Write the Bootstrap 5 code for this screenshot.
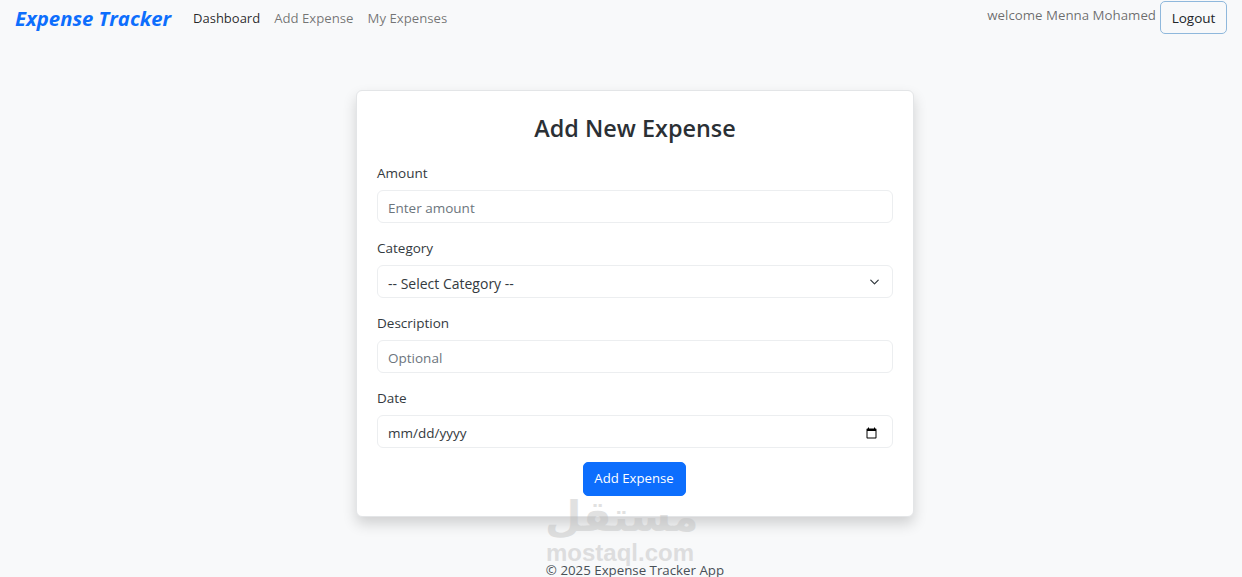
<!DOCTYPE html>
<html>
<head>
    <meta charset="utf-8">
    <meta name="viewport" content="width=device-width, initial-scale=1">
    <title>Expense Tracker</title>
    <link href="https://cdn.jsdelivr.net/npm/bootstrap@5.3.3/dist/css/bootstrap.min.css" rel="stylesheet">
    <style>
        html, body {
            height: 577px;
            overflow: hidden;
        }
        body {
            background: #f8f9fa;
            font-family: "Open Sans", "Noto Sans", sans-serif;
            font-size: 13.5px;
            color: #212529;
            position: relative;
        }
        .top-bar {
            padding: 1px 15px 0 15px;
            height: 35px;
        }
        .top-bar .navbar-brand {
            color: #0d6efd;
            font-size: 20.3px;
            font-weight: 700;
            font-style: italic;
            padding: 0;
            margin-right: 14px;
            line-height: 36px;
        }
        .top-bar .nav-link {
            font-size: 13.2px;
            padding: 0 7px;
            color: rgba(0, 0, 0, .55);
            line-height: 36px;
        }
        .top-bar .nav-link.active {
            color: rgba(0, 0, 0, .85);
            font-size: 13px;
        }
        .top-bar .nav-item + .nav-item .nav-link {
            margin-left: -2px;
        }
        .user-box {
            margin-top: 1px;
        }
        .hello-text {
            color: rgba(0, 0, 0, .58);
            font-size: 13.3px;
            margin-right: 4px;
            margin-top: -3px;
        }
        .logout-btn {
            font-size: 13.5px;
            width: 67px;
            height: 33px;
            padding: 1px 0 0;
            color: #212529;
            background: #f8f9fa;
            border: 1px solid #8fb8dc;
            border-radius: 5px;
        }
        .page-main {
            padding-left: 28px;
        }
        .expense-card {
            width: 558px;
            height: 427px;
            margin: 55px auto 0;
            padding: 21px 20px 20px;
            background: #fff;
            border: 1px solid #e3e5e7;
            border-radius: 6px;
            box-shadow: 0 7px 14px rgba(0, 0, 0, .16);
        }
        .expense-card h2 {
            font-size: 23.4px;
            font-weight: 600;
            color: #2b3035;
            text-align: center;
            margin: 0 0 19px;
            line-height: 32px;
        }
        .field-block {
            height: 75px;
        }
        .field-block .form-label {
            font-size: 13.5px;
            color: #343a40;
            margin-bottom: 7px;
            line-height: 20px;
            display: block;
        }
        .field-block .form-control,
        .field-block .form-select {
            height: 33px;
            min-height: 33px;
            font-size: 13.5px;
            padding-top: 2px;
            padding-bottom: 0;
            padding-left: 10px;
            color: #343a40;
            border-color: #eceef0;
            border-radius: 6px;
        }
        .field-block .form-select,
        .field-block input[type="date"] {
            padding-top: 4px;
        }
        .field-block .form-select {
            font-size: 14px;
            background-size: 13px 10px;
            background-position: right 11px center;
        }
        .field-block .form-control::placeholder {
            color: #6c757d;
        }
        .submit-btn {
            font-size: 13.2px;
            width: 103px;
            height: 34px;
            padding: 0;
            border-radius: 5px;
            margin-top: -1px;
            margin-right: 2px;
        }
        .page-foot {
            margin-top: 46px;
            text-align: center;
            font-size: 13.3px;
            color: #495057;
            line-height: 14px;
        }
        .wm-mark {
            position: absolute;
            left: 545px;
            top: 491px;
            width: 150px;
            text-align: center;
            color: #bdbdbd;
            opacity: .45;
            pointer-events: none;
        }
        .wm-arabic {
            font-family: "DejaVu Sans", sans-serif;
            font-size: 42px;
            font-weight: 700;
            line-height: 52px;
        }
        .wm-latin {
            font-family: "Liberation Sans", sans-serif;
            font-size: 24px;
            font-weight: 700;
            line-height: 20px;
        }
    </style>
</head>
<body>
    <nav class="navbar navbar-expand top-bar">
        <div class="d-flex align-items-start justify-content-between w-100">
            <div class="d-flex align-items-start">
                <a class="navbar-brand" href="#">Expense Tracker</a>
                <ul class="navbar-nav">
                    <li class="nav-item"><a class="nav-link active" href="#">Dashboard</a></li>
                    <li class="nav-item"><a class="nav-link" href="#">Add Expense</a></li>
                    <li class="nav-item"><a class="nav-link" href="#">My Expenses</a></li>
                </ul>
            </div>
            <div class="d-flex align-items-center user-box">
                <span class="hello-text">welcome Menna Mohamed</span>
                <button class="btn logout-btn" type="button">Logout</button>
            </div>
        </div>
    </nav>

    <div class="page-main">
        <div class="expense-card">
            <h2>Add New Expense</h2>
            <form>
                <div class="field-block">
                    <label class="form-label" for="amount">Amount</label>
                    <input class="form-control" id="amount" type="number" placeholder="Enter amount">
                </div>
                <div class="field-block">
                    <label class="form-label" for="category">Category</label>
                    <select class="form-select" id="category">
                        <option>-- Select Category --</option>
                    </select>
                </div>
                <div class="field-block">
                    <label class="form-label" for="description">Description</label>
                    <input class="form-control" id="description" type="text" placeholder="Optional">
                </div>
                <div class="field-block">
                    <label class="form-label" for="date">Date</label>
                    <input class="form-control" id="date" type="date">
                </div>
                <div class="text-center">
                    <button class="btn btn-primary submit-btn" type="button">Add Expense</button>
                </div>
            </form>
        </div>

        <footer class="page-foot">© 2025 Expense Tracker App</footer>
    </div>

    <div class="wm-mark">
        <div class="wm-arabic">مستقل</div>
        <div class="wm-latin">mostaql.com</div>
    </div>

    <script src="https://cdn.jsdelivr.net/npm/bootstrap@5.3.3/dist/js/bootstrap.bundle.min.js"></script>
</body>
</html>
